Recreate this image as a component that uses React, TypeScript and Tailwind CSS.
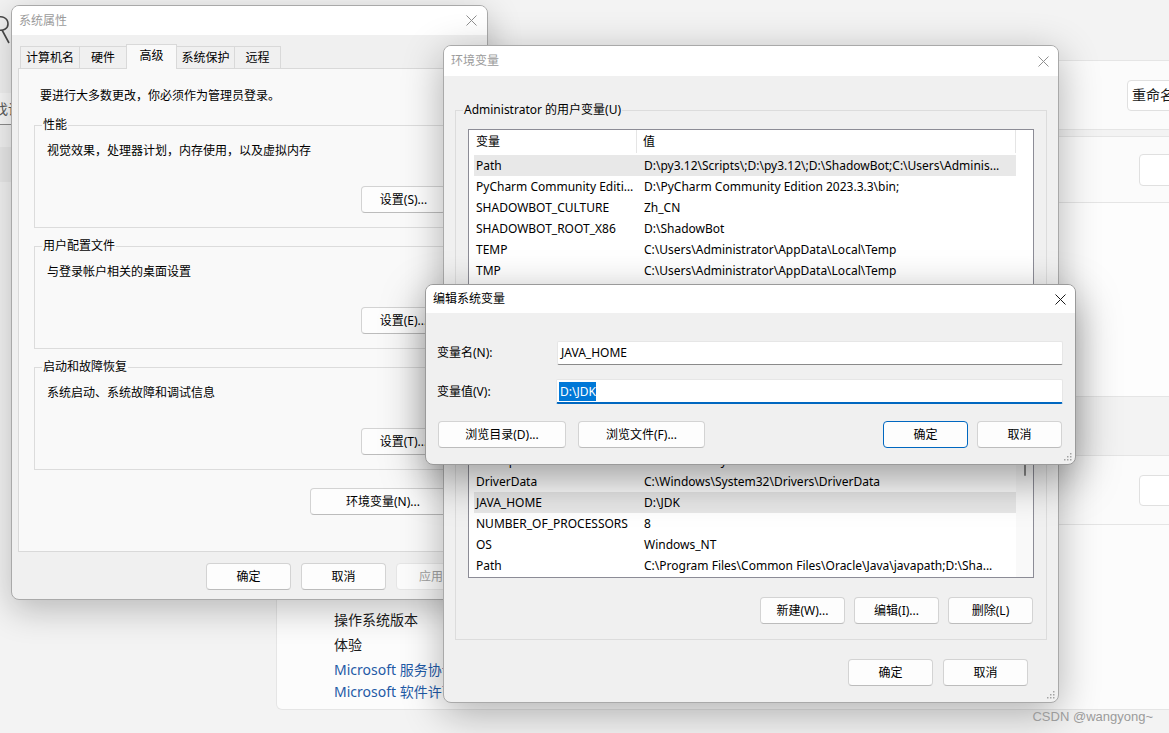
import React from "react";

const FONT = "font-['Noto_Sans','Noto_Sans_CJK_SC',sans-serif]";

function CloseX({ dark }: { dark?: boolean }) {
  return (
    <svg width="11" height="11" viewBox="0 0 11 11" className="shrink-0">
      <path d="M0.5 0.5L10.5 10.5M10.5 0.5L0.5 10.5" stroke={dark ? "#1a1a1a" : "#8f8f8f"} strokeWidth="1" fill="none" />
    </svg>
  );
}

function Grip() {
  return (
    <svg width="9" height="9" viewBox="0 0 9 9" className="absolute right-[3px] bottom-[3px]">
      <g fill="#a3a3a3">
        <rect x="7" y="1" width="1.5" height="1.5" />
        <rect x="4" y="4" width="1.5" height="1.5" />
        <rect x="7" y="4" width="1.5" height="1.5" />
        <rect x="1" y="7" width="1.5" height="1.5" />
        <rect x="4" y="7" width="1.5" height="1.5" />
        <rect x="7" y="7" width="1.5" height="1.5" />
      </g>
    </svg>
  );
}

function Btn({ label, w, kind }: { label: string; w: string; kind?: "primary" | "disabled" }) {
  const look =
    kind === "primary"
      ? "border-[#0067c0] bg-[#fdfdfd]"
      : kind === "disabled"
      ? "border-[#e5e5e5] bg-[#fbfbfb] text-[#a0a0a0]"
      : "border-[#d3d3d3] border-b-[#bcbcbc] bg-[#fdfdfd]";
  return (
    <div className={`h-[27px] shrink-0 flex items-center justify-center rounded-[4px] border leading-4 ${look} ${w}`}>
      {label}
    </div>
  );
}

function Group({ title, className, children }: { title: string; className: string; children: React.ReactNode }) {
  return (
    <fieldset className={`border border-[#dcdcdc] ${className}`}>
      <legend className="ml-[7px] px-[1px] leading-4">{title}</legend>
      {children}
    </fieldset>
  );
}

type Row = [string, string];

function VarList({ rows, hl, h, end, thumb }: { rows: Row[]; hl: number; h: string; end?: boolean; thumb?: boolean }) {
  return (
    <div className={`${h} border border-[#8c8c96] bg-white flex overflow-hidden`}>
      <div className="w-[547px] shrink-0 flex flex-col">
        <div className="h-[23px] shrink-0 flex border-r border-[#e5e5e5]">
          <div className="w-[168px] pl-[7px] border-r border-[#e5e5e5] flex items-center">变量</div>
          <div className="flex-1 pl-[6px] flex items-center">值</div>
        </div>
        <div className={`flex-1 min-h-0 overflow-hidden flex flex-col pl-[5px] ${end ? "justify-end pb-[1px]" : "pt-[2px]"}`}>
          {rows.map(([k, v], i) => (
            <div key={i} className={`h-[21px] shrink-0 flex leading-[21px] ${i === hl ? "bg-[#e8e8e8]" : ""}`}>
              <div className="w-[163px] shrink-0 pl-[2px] pr-[3px] truncate">{k}</div>
              <div className="flex-1 min-w-0 pl-[7px] pr-[6px] truncate">{v}</div>
            </div>
          ))}
        </div>
      </div>
      <div className={`flex-1 ${thumb ? "bg-[#f9f9f9]" : ""}`}>
        {thumb && <div className="ml-[8px] mt-[31px] w-[2px] h-[45px] rounded-full bg-[#8a8a8a]" />}
      </div>
    </div>
  );
}

const userRows: Row[] = [
  ["Path", "D:\\py3.12\\Scripts\\;D:\\py3.12\\;D:\\ShadowBot;C:\\Users\\Adminis..."],
  ["PyCharm Community Edition", "D:\\PyCharm Community Edition 2023.3.3\\bin;"],
  ["SHADOWBOT_CULTURE", "Zh_CN"],
  ["SHADOWBOT_ROOT_X86", "D:\\ShadowBot"],
  ["TEMP", "C:\\Users\\Administrator\\AppData\\Local\\Temp"],
  ["TMP", "C:\\Users\\Administrator\\AppData\\Local\\Temp"],
];

const sysRows: Row[] = [
  ["ComSpec", "C:\\Windows\\system32\\cmd.exe"],
  ["DriverData", "C:\\Windows\\System32\\Drivers\\DriverData"],
  ["JAVA_HOME", "D:\\JDK"],
  ["NUMBER_OF_PROCESSORS", "8"],
  ["OS", "Windows_NT"],
  ["Path", "C:\\Program Files\\Common Files\\Oracle\\Java\\javapath;D:\\Sha..."],
];

function SettingsBackdrop() {
  return (
    <div className="absolute inset-0 flex bg-[#f3f3f3]">
      <div className="w-[276px] shrink-0 flex flex-col">
        <div className="h-[93px] relative">
          <svg width="14" height="50" viewBox="0 0 14 50" className="absolute left-0 top-0">
            <path d="M-4 18 C2 15 8 18 8 24 C8 29 3 31 -2 30 M2 30 L9 43" stroke="#4a4a4a" strokeWidth="1.6" fill="none" />
          </svg>
        </div>
        <div className="-ml-[32px] w-[250px] h-[32px] bg-[#fbfbfb] border-b border-[#8e8e8e] flex items-center pl-[12px] text-[14px] text-[#5c5c5c]">
          查找设置
        </div>
        <div className="-ml-[20px] mt-[22px] w-[240px] h-[35px] rounded-[4px] bg-[#eaeaea]" />
      </div>
      <div className="w-[990px] shrink-0 flex flex-col pt-[60px] text-[14px] text-[#1b1b1b]">
        <div className="h-[70px] rounded-[6px] border border-[#e5e5e5] bg-[#fbfbfb] flex items-center justify-end pr-[16px]">
          <div className="w-[122px] h-[31px] rounded-[4px] border border-[#e0e0e0] bg-white flex items-center pl-[4px] text-[14px]">重命名这台电脑</div>
        </div>
        <div className="mt-[6px] h-[67px] rounded-t-[6px] border border-[#e5e5e5] bg-[#fbfbfb] flex items-center justify-end pr-[16px]">
          <div className="w-[110px] h-[32px] rounded-[4px] border border-[#e0e0e0] bg-white" />
        </div>
        <div className="h-[194px] border border-t-0 border-[#e5e5e5] bg-[#fdfdfd] rounded-b-[6px]" />
        <div className="h-[58px]" />
        <div className="h-[70px] rounded-t-[6px] border border-[#e5e5e5] bg-[#fbfbfb] flex items-center justify-end pr-[16px]">
          <div className="w-[110px] h-[31px] rounded-[4px] border border-[#e0e0e0] bg-white" />
        </div>
        <div className="h-[185px] border border-t-0 border-[#e5e5e5] bg-[#fcfcfc] rounded-b-[6px] pl-[57px] pt-[82px]">
          <div className="leading-[25px]">操作系统版本</div>
          <div className="leading-[25px]">体验</div>
          <div className="mt-[2px] leading-[22px] text-[#1f5aa6]">Microsoft 服务协议</div>
          <div className="leading-[22px] text-[#1f5aa6]">Microsoft 软件许可条款</div>
        </div>
      </div>
    </div>
  );
}

function SystemProps() {
  const tabs: [string, string][] = [
    ["计算机名", "w-[60px]"],
    ["硬件", "w-[48px]"],
    ["高级", "w-[51px]"],
    ["系统保护", "w-[59px]"],
    ["远程", "w-[47px]"],
  ];
  return (
    <div className="absolute left-[11px] top-[5px] w-[477px] h-[595px] rounded-[8px] border border-[#a9a9a9] bg-[#f0f0f0] shadow-[0_10px_34px_rgba(0,0,0,0.24)] overflow-hidden flex flex-col">
      <div className="h-[29px] shrink-0 bg-white flex items-center justify-between pl-[7px] pr-[10px]">
        <span className="text-[#9b9b9b]">系统属性</span>
        <CloseX />
      </div>
      <div className="flex-1 px-[6px] flex flex-col">
        <div className="mt-[9px] h-[24px] pl-[2px] flex items-end">
          {tabs.map(([t, w], i) =>
            i === 2 ? (
              <div key={t} className={`${w} -ml-px h-[25px] -mb-px relative z-10 border border-b-0 border-[#d9d9d9] bg-[#f9f9f9] flex items-center justify-center pb-[2px]`}>
                {t}
              </div>
            ) : (
              <div key={t} className={`${w} ${i > 0 ? "-ml-px" : ""} h-[22px] border border-b-0 border-[#d9d9d9] bg-[#f0f0f0] flex items-center justify-center`}>
                {t}
              </div>
            )
          )}
        </div>
        <div className="h-[484px] shrink-0 border border-[#d9d9d9] bg-[#f9f9f9] px-[15px] pt-[19px] flex flex-col">
          <p className="ml-[6px] leading-4">要进行大多数更改，你必须作为管理员登录。</p>
          <Group title="性能" className="mt-[13px]">
            <div className="pl-[12px] pr-[18px] pb-[14px]">
              <p className="mt-[10px] leading-4">视觉效果，处理器计划，内存使用，以及虚拟内存</p>
              <div className="mt-[27px] flex justify-end">
                <Btn label="设置(S)..." w="w-[85px]" />
              </div>
            </div>
          </Group>
          <Group title="用户配置文件" className="mt-[10px]">
            <div className="pl-[12px] pr-[18px] pb-[14px]">
              <p className="mt-[10px] leading-4">与登录帐户相关的桌面设置</p>
              <div className="mt-[27px] flex justify-end">
                <Btn label="设置(E)..." w="w-[85px]" />
              </div>
            </div>
          </Group>
          <Group title="启动和故障恢复" className="mt-[10px]">
            <div className="pl-[12px] pr-[18px] pb-[14px]">
              <p className="mt-[10px] leading-4">系统启动、系统故障和调试信息</p>
              <div className="mt-[27px] flex justify-end">
                <Btn label="设置(T)..." w="w-[85px]" />
              </div>
            </div>
          </Group>
          <div className="mt-[18px] flex justify-end pr-[9px]">
            <Btn label="环境变量(N)..." w="w-[146px]" />
          </div>
        </div>
        <div className="mt-[11px] flex justify-end gap-[10px]">
          <Btn label="确定" w="w-[85px]" />
          <Btn label="取消" w="w-[85px]" />
          <Btn label="应用(A)" w="w-[85px]" kind="disabled" />
        </div>
      </div>
    </div>
  );
}

function EnvVars() {
  return (
    <div className="absolute left-[443px] top-[45px] w-[616px] h-[658px] rounded-[8px] border border-[#a9a9a9] bg-[#f0f0f0] shadow-[0_10px_40px_rgba(0,0,0,0.3)] overflow-hidden flex flex-col">
      <div className="h-[30px] shrink-0 bg-white flex items-center justify-between pl-[7px] pr-[9px]">
        <span className="text-[#9b9b9b]">环境变量</span>
        <CloseX />
      </div>
      <div className="flex-1 px-[11px] flex flex-col">
        <Group title="Administrator 的用户变量(U)" className="mt-[26px]">
          <div className="px-[12px] pb-[15px]">
            <div className="mt-[11px]">
              <VarList rows={userRows} hl={0} h="h-[170px]" />
            </div>
            <div className="mt-[19px] flex justify-end gap-[10px]">
              <Btn label="新建(N)..." w="w-[85px]" />
              <Btn label="编辑(E)..." w="w-[85px]" />
              <Btn label="删除(D)" w="w-[85px]" />
            </div>
          </div>
        </Group>
        <Group title="系统变量(S)" className="mt-[11px]">
          <div className="px-[12px] pb-[15px]">
            <div className="mt-[11px]">
              <VarList rows={sysRows} hl={2} h="h-[179px]" end thumb />
            </div>
            <div className="mt-[19px] flex justify-end gap-[9px] pr-px">
              <Btn label="新建(W)..." w="w-[85px]" />
              <Btn label="编辑(I)..." w="w-[85px]" />
              <Btn label="删除(L)" w="w-[85px]" />
            </div>
          </div>
        </Group>
        <div className="mt-[19px] flex justify-end gap-[10px] pr-[19px]">
          <Btn label="确定" w="w-[85px]" />
          <Btn label="取消" w="w-[85px]" />
        </div>
      </div>
      <Grip />
    </div>
  );
}

function EditDialog() {
  return (
    <div className="absolute left-[425px] top-[284px] w-[651px] h-[181px] rounded-[8px] border border-[#9a9a9a] bg-[#f0f0f0] shadow-[0_14px_44px_rgba(0,0,0,0.4)] overflow-hidden flex flex-col">
      <div className="h-[28px] shrink-0 bg-white flex items-center justify-between pl-[7px] pr-[9px]">
        <span>编辑系统变量</span>
        <CloseX dark />
      </div>
      <div className="flex-1 pl-[11px] pr-[12px] flex flex-col">
        <div className="mt-[28px] h-[24px] flex items-center">
          <div className="w-[120px] shrink-0">变量名(N):</div>
          <div className="flex-1 h-full bg-white border border-[#e6e6e6] border-b-[#8a8a8a] rounded-[2px] flex items-center pl-[3px]">
            JAVA_HOME
          </div>
        </div>
        <div className="mt-[14px] h-[25px] flex items-center">
          <div className="w-[119px] shrink-0">变量值(V):</div>
          <div className="flex-1 h-full bg-white border border-[#e6e6e6] border-b-2 border-b-[#0067c0] rounded-[2px] flex items-center pl-[2px]">
            <span className="bg-[#0078d7] text-white leading-[19px] pl-px">D:\JDK</span>
          </div>
        </div>
        <div className="mt-[17px] flex items-center pl-px pr-px">
          <Btn label="浏览目录(D)..." w="w-[128px]" />
          <div className="ml-[12px]">
            <Btn label="浏览文件(F)..." w="w-[127px]" />
          </div>
          <div className="ml-auto flex gap-[9px]">
            <Btn label="确定" w="w-[85px]" kind="primary" />
            <Btn label="取消" w="w-[85px]" />
          </div>
        </div>
      </div>
      <Grip />
    </div>
  );
}

export default function App() {
  return (
    <div className={`relative w-[1169px] h-[733px] overflow-hidden bg-[#f3f3f3] text-[12px] leading-4 text-black ${FONT}`}>
      <SettingsBackdrop />
      <SystemProps />
      <EnvVars />
      <EditDialog />
      <div className="absolute right-[16px] bottom-[8px] text-[13px] text-[#9b9b9b] font-['Liberation_Sans',sans-serif]">
        CSDN @wangyong~
      </div>
    </div>
  );
}
